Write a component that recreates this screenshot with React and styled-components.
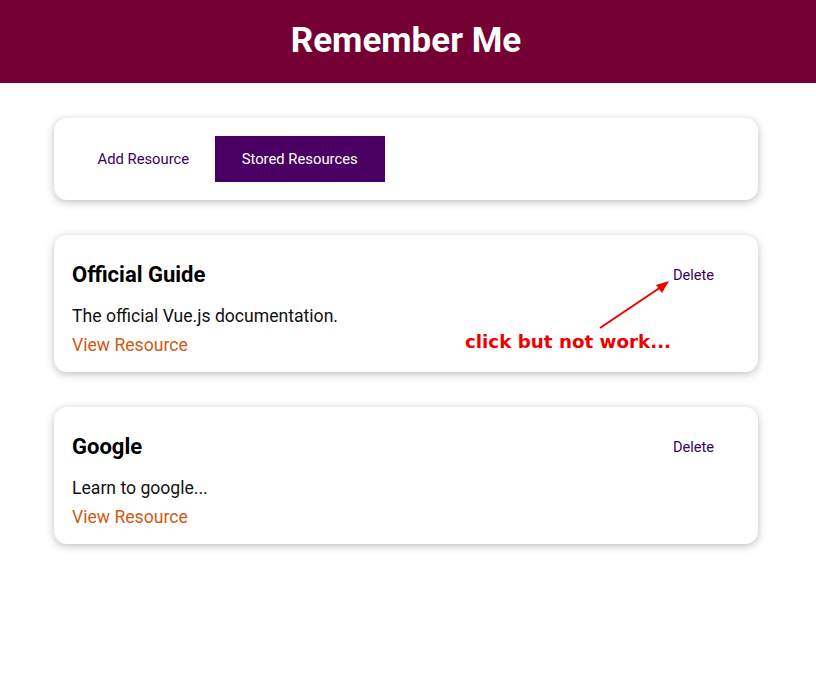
import React from "react";
import styled, { createGlobalStyle } from "styled-components";

const GlobalStyle = createGlobalStyle`
  html, body {
    margin: 0;
    padding: 0;
    background: #ffffff;
    font-family: Roboto, "Liberation Sans", sans-serif;
  }
`;

const resources = [
  {
    id: "official-guide",
    title: "Official Guide",
    description: "The official Vue.js documentation.",
    note: true,
  },
  {
    id: "google",
    title: "Google",
    description: "Learn to google...",
  },
];

const App = () => {
  return (
    <>
      <GlobalStyle />
      <Header>
        <Title>Remember Me</Title>
      </Header>
      <Main>
        <Card>
          <Tabs>
            <TabButton>Add Resource</TabButton>
            <TabButton active>Stored Resources</TabButton>
          </Tabs>
        </Card>
        {resources.map((res) => (
          <Card key={res.id} tight>
            <ResourceHead>
              <ResourceTitle>{res.title}</ResourceTitle>
              <FlatButton>Delete</FlatButton>
            </ResourceHead>
            <Description>{res.description}</Description>
            <Link href="#">View Resource</Link>
            {res.note && (
              <Note>
                <Arrow width="80" height="56" viewBox="0 0 80 56">
                  <line x1="6" y1="50" x2="70" y2="7" stroke="#ee0000" strokeWidth="2" />
                  <polygon points="75,3 62,7 68,15" fill="#ee0000" />
                </Arrow>
                <NoteText>click but not work...</NoteText>
              </Note>
            )}
          </Card>
        ))}
      </Main>
    </>
  );
};

const Header = styled.header`
  height: 83px;
  padding-right: 4px;
  background: #740034;
  display: flex;
  align-items: center;
  justify-content: center;
`;

const Title = styled.h1`
  margin: 0;
  color: #ffffff;
  font-size: 35px;
  font-weight: 700;
  transform: translateY(-1px);
`;

const Main = styled.main`
  width: 704px;
  margin: 35px 0 40px calc(50% - 354px);
  display: flex;
  flex-direction: column;
  gap: 35px;
`;

const Card = styled.section`
  position: relative;
  background: #ffffff;
  border-radius: 13px;
  box-shadow: 0 2px 9px rgba(0, 0, 0, 0.26);
  padding: ${(p) => (p.tight ? "18px 18px 17px" : "18px")};
`;

const Tabs = styled.div`
  display: flex;
`;

const TabButton = styled.button`
  font-family: Roboto, "Liberation Sans", sans-serif;
  font-size: 14.8px;
  height: 46px;
  padding: ${(p) => (p.active ? "0 27px" : "0 25.5px")};
  border: none;
  background: ${(p) => (p.active ? "#4a0062" : "transparent")};
  color: ${(p) => (p.active ? "#ffffff" : "#3a0061")};
  cursor: pointer;
`;

const ResourceHead = styled.div`
  display: flex;
  align-items: center;
  justify-content: space-between;
  height: 43px;
`;

const ResourceTitle = styled.h3`
  margin: 0;
  font-size: 22px;
  font-weight: 700;
  color: #000000;
`;

const FlatButton = styled.button`
  font-family: Roboto, "Liberation Sans", sans-serif;
  font-size: 14.6px;
  padding: 10px 26px;
  border: none;
  background: transparent;
  color: #3a0061;
  cursor: pointer;
`;

const Description = styled.p`
  margin: 10px 0 0;
  font-size: 17.6px;
  color: #111111;
`;

const Link = styled.a`
  display: block;
  margin-top: 9px;
  font-size: 17.6px;
  color: #cf5a12;
  text-decoration: none;
`;

const Note = styled.div`
  position: absolute;
  left: 410px;
  top: 43px;
  width: 240px;
  height: 80px;
`;

const Arrow = styled.svg`
  position: absolute;
  left: 130px;
  top: 0;
`;

const NoteText = styled.span`
  position: absolute;
  left: 1px;
  top: 53px;
  font-family: "DejaVu Sans", sans-serif;
  font-weight: 700;
  font-size: 18.3px;
  color: #ee0000;
  white-space: nowrap;
`;

export default App;
